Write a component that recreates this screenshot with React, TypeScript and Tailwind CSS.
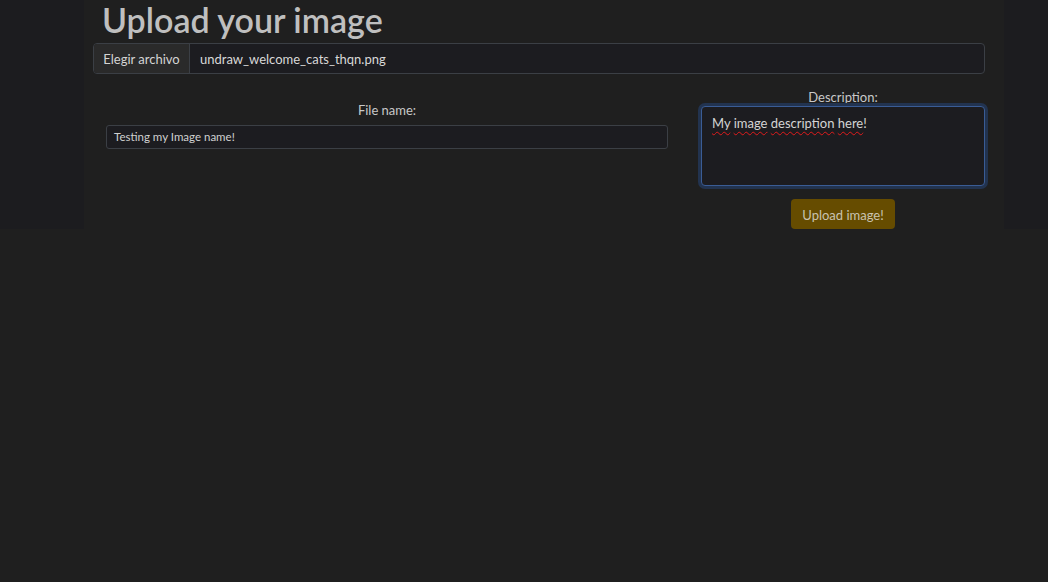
import React from 'react';

const Misspelled: React.FC<{ children: React.ReactNode }> = ({ children }) => (
  <span className="underline decoration-wavy decoration-[#e01b1b] decoration-1 underline-offset-[3px]">
    {children}
  </span>
);

export default function App() {
  return (
    <div className="min-h-[582px] bg-[#1f1f1f] font-['Lato','Liberation_Sans',sans-serif] text-[#cfcfcf]">
      {/* Header band */}
      <div className="bg-[#1c1c1f]">
        <div className="ml-[84px] w-[920px] bg-[#1f1f1f] pl-[9px] pr-[19px]">
          <h1 className="pl-[9px] text-[34px] leading-[40px] font-semibold text-[#bfbfbf]">
            Upload your image
          </h1>

          {/* File picker */}
          <div className="mt-[3px] flex h-[31px] overflow-hidden rounded-[4px] border border-[#3b3f45] bg-[#1c1c20] text-[13px]">
            <div className="flex w-[96px] items-center justify-center border-r border-[#3b3f45] bg-[#2a2a2a] pt-[2px] text-[#d4d4d4]">
              Elegir archivo
            </div>
            <div className="flex items-center pl-[10px] pt-[2px] text-[#d8d8d8]">undraw_welcome_cats_thqn.png</div>
          </div>

          {/* Form row */}
          <div className="flex">
            <div className="w-[595px] pl-[13px] pr-[20px] pt-[27px]">
              <div className="text-center text-[13px] leading-[18px] text-[#c8c8c8]">File name:</div>
              <div className="mt-[6px] flex h-[24px] items-center rounded-[3px] border border-[#3b3f45] bg-[#1c1c20] pl-[7px] text-[11.5px] text-[#d0d0d0]">
                Testing my Image name!
              </div>
            </div>

            <div className="flex w-[297px] flex-col items-center pl-[13px] pt-[14px]">
              <div className="text-center text-[13px] leading-[18px] text-[#c8c8c8]">Description:</div>
              <div className="h-[80px] w-full rounded-[4px] border border-[#3a5c95] bg-[#1c1c20] px-[10px] pt-[6px] text-[13px] leading-[20px] text-[#d4d4d4] shadow-[0_0_0_3px_#22334f]">
                <Misspelled>My</Misspelled> <Misspelled>image</Misspelled>{' '}
                <Misspelled>description</Misspelled> <Misspelled>here</Misspelled>!
              </div>
              <button className="mt-[13px] h-[30px] w-[104px] rounded-[4px] bg-[#664c00] pt-[3px] text-[13px] text-[#c9c3b0]">
                Upload image!
              </button>
            </div>
          </div>
        </div>
      </div>
    </div>
  );
}
